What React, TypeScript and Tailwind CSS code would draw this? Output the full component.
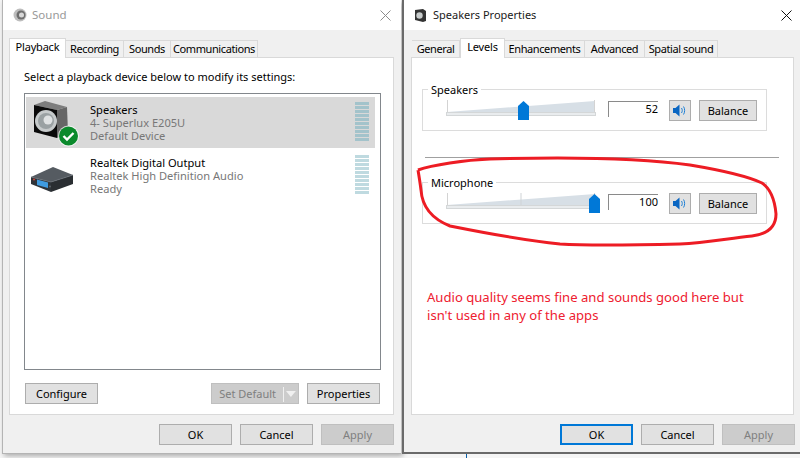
const font = { fontFamily: '"Noto Sans", "Open Sans", sans-serif' };

function Btn({ label, w, disabled, focus }: { label: string; w: string; disabled?: boolean; focus?: boolean }) {
  return (
    <div
      className={`${w} h-[21px] flex items-center justify-center pt-px text-[11px] border ${
        disabled
          ? "bg-[#cccccc] border-[#bfbfbf] text-[#7f7f7f]"
          : focus
            ? "bg-[#e1e1e1] border-2 border-[#0078d7] text-black"
            : "bg-[#e1e1e1] border-[#adadad] text-black"
      }`}
    >
      {label}
    </div>
  );
}

function Tab({ label, w, active }: { label: string; w: string; active?: boolean }) {
  return (
    <div
      className={`${w} flex items-center justify-center whitespace-nowrap text-[11px] text-black border border-[#d9d9d9] border-b-0 ${
        active ? "h-[20px] bg-white -mb-px pb-[3px] z-10 tracking-[-0.2px]" : "h-[17px] bg-[#f0f0f0] border-l-0 tracking-[-0.4px]"
      }`}
    >
      {label}
    </div>
  );
}

function Meter({ color }: { color: string }) {
  return (
    <div className="flex flex-col gap-px w-[14px]">
      {Array.from({ length: 10 }).map((_, i) => (
        <div key={i} className={`h-[3px] ${color}`} />
      ))}
    </div>
  );
}

function Close({ color }: { color: string }) {
  return (
    <svg width="11" height="11" viewBox="0 0 11 11" className="shrink-0">
      <path d="M0.5 0.5L10.5 10.5M10.5 0.5L0.5 10.5" stroke={color} strokeWidth="1" fill="none" />
    </svg>
  );
}

function SpeakerIcon() {
  return (
    <svg width="60" height="51" viewBox="0 0 60 51">
      <path d="M8 8L19 4L41 10L31 13Z" fill="#7d7d7d" />
      <path d="M31 13L41 10L42 36L31 41Z" fill="#666666" />
      <path d="M8 8L31 13L31 41L8 35Z" fill="#0a0a0a" />
      <circle cx="20" cy="24" r="11" fill="#c6cacb" />
      <circle cx="20" cy="24" r="8" fill="#9aa1a3" />
      <circle cx="22" cy="23" r="4.5" fill="#dfe2e3" />
      <circle cx="42.5" cy="39" r="10.5" fill="#ffffff" opacity="0.7" />
      <circle cx="42.5" cy="39" r="9.5" fill="#0b8a2c" />
      <path d="M37.5 39L41 42.5L47.5 36" stroke="#ffffff" strokeWidth="2.4" fill="none" />
    </svg>
  );
}

function DeviceIcon() {
  return (
    <svg width="60" height="51" viewBox="0 0 60 51">
      <path d="M5 27L27 17L47 25L25 32Z" fill="#555b61" />
      <path d="M5 27L25 32L25 42L5 34Z" fill="#2f3439" />
      <path d="M25 32L47 25L47 34L25 42Z" fill="#2a2e32" />
      <path d="M5 27L25 32L47 25" stroke="#6d747b" strokeWidth="0.7" fill="none" />
      <path d="M11 29.5L22 32.5L22 38L11 35Z" fill="#3f9be0" />
      <circle cx="8" cy="29.5" r="1" fill="#c9443c" />
      <circle cx="24" cy="36.5" r="1" fill="#5d6368" />
    </svg>
  );
}

function Mute() {
  return (
    <div className="w-[22px] h-[21px] bg-[#e1e1e1] border border-[#adadad] flex items-center justify-center">
      <svg width="16" height="15" viewBox="0 0 16 15">
        <path d="M1 5H3.5L7.5 1.5V13.5L3.5 10H1Z" fill="#0a66c2" />
        <path d="M9.5 5C10.5 6.5 10.5 8.5 9.5 10M11.5 3.5C13 5.5 13 9.5 11.5 11.5" stroke="#1c7fd6" strokeWidth="1" fill="none" />
      </svg>
    </div>
  );
}

function Slider({ thumb, ticks }: { thumb: string; ticks: boolean }) {
  return (
    <div className="relative w-[150px] h-[21px] shrink-0">
      <svg width="150" height="21" viewBox="0 0 150 21" className="block">
        <path d="M1 12L149 1V12Z" fill="#d7dfe6" />
        <rect x="0.5" y="12.5" width="149" height="3" fill="#e9ecee" stroke="#d4d7d8" />
        <path d="M1.5 0V12M148.5 0V12" stroke="#d3d3d3" />
        {ticks && <path d="M75 0V12" stroke="#cfd3d6" />}
      </svg>
      <svg width="11" height="19" viewBox="0 0 11 19" className={`absolute top-px ${thumb}`}>
        <path d="M0 5L5.5 0L11 5V19H0Z" fill="#0078d7" />
      </svg>
    </div>
  );
}

function Group({ label, value, thumb, ticks, className }: { label: string; value: string; thumb: string; ticks: boolean; className: string }) {
  return (
    <div className={`relative w-[345px] h-[42px] border border-[#dcdcdc] pl-[23px] pt-[10px] flex items-start ${className}`}>
      <div className="absolute left-[5px] -top-[8px] bg-white px-[3px] text-[11px] leading-[16px] text-black">{label}</div>
      <Slider thumb={thumb} ticks={ticks} />
      <div className="ml-[12px] w-[50px] h-[16px] mt-px border-l border-t border-[#8a8a8a] text-[11px] leading-[13px] text-right text-black">
        {value}
      </div>
      <div className="ml-[11px]"><Mute /></div>
      <div className="ml-[8px]"><Btn label="Balance" w="w-[58px]" /></div>
    </div>
  );
}

export default function App() {
  return (
    <div className="relative w-[800px] h-[458px] overflow-hidden bg-[#f5f5f5]" style={font}>
      <div className="absolute left-[466px] top-[453px] w-px h-[5px] bg-[#0a5fa8]" />

      {/* Sound window */}
      <div className="absolute left-[2px] top-0 w-[399px] h-[454px] flex flex-col border-l border-b border-[#b4b4b4] bg-[#f0f0f0] shadow-[2px_2px_5px_rgba(0,0,0,0.3)]">
        <div className="h-[30px] bg-white flex items-center pl-[10px] pr-[10px] shrink-0">
          <svg width="14" height="14" viewBox="0 0 14 14">
            <circle cx="7" cy="7" r="6.5" fill="#bdbdbd" />
            <circle cx="8" cy="7" r="4.5" fill="#6e6e6e" />
            <circle cx="8.5" cy="7" r="2.5" fill="#d8d8d8" />
          </svg>
          <span className="ml-[5px] text-[11.5px] text-[#999999] flex-1">Sound</span>
          <Close color="#8c8c8c" />
        </div>
        <div className="flex items-end h-[27px] pl-[6px] shrink-0">
          <Tab label="Playback" w="w-[57px]" active />
          <Tab label="Recording" w="w-[58px]" />
          <Tab label="Sounds" w="w-[47px]" />
          <Tab label="Communications" w="w-[87px]" />
        </div>
        <div className="ml-[6px] w-[385px] h-[358px] bg-white border border-[#d9d9d9] pl-[14px] pr-[12px] flex flex-col shrink-0">
          <div className="mt-[11px] h-[16px] text-[11px] leading-[16px] text-black">Select a playback device below to modify its settings:</div>
          <div className="mt-[8px] h-[277px] border border-[#82878c] p-px flex flex-col gap-[2px]">
            <div className="w-[349px] h-[51px] mt-[2px] bg-[#d9d9d9] flex items-start">
              <SpeakerIcon />
              <div className="ml-[4px] pt-[6px] text-[11.1px] leading-[13px] flex-1">
                <div className="text-black">Speakers</div>
                <div className="text-[#777777]">4- Superlux E205U</div>
                <div className="text-[#777777]">Default Device</div>
              </div>
              <div className="pt-[5px] mr-[6px]"><Meter color="bg-[#a3c3cb]" /></div>
            </div>
            <div className="w-[349px] h-[51px] flex items-start">
              <DeviceIcon />
              <div className="ml-[4px] pt-[6px] text-[11.1px] leading-[13px] flex-1">
                <div className="text-black">Realtek Digital Output</div>
                <div className="text-[#777777]">Realtek High Definition Audio</div>
                <div className="text-[#777777]">Ready</div>
              </div>
              <div className="pt-[5px] mr-[6px]"><Meter color="bg-[#bfdae0]" /></div>
            </div>
          </div>
          <div className="mt-[13px] flex items-center">
            <Btn label="Configure" w="w-[73px] ml-px" />
            <div className="ml-auto w-[88px] h-[21px] pt-px bg-[#cccccc] border border-[#bfbfbf] flex items-center text-[11px] text-[#7f7f7f]">
              <span className="w-[72px] text-center">Set Default</span>
              <span className="w-px h-[15px] bg-[#f0f0f0]" />
              <svg width="14" height="8" viewBox="0 0 14 8"><path d="M2 1H12L7 7Z" fill="#f0f0f0" /></svg>
            </div>
            <div className="ml-[8px] mr-px"><Btn label="Properties" w="w-[73px]" /></div>
          </div>
        </div>
        <div className="flex gap-[8px] pl-[156px] pt-[9px]">
          <Btn label="OK" w="w-[73px]" />
          <Btn label="Cancel" w="w-[73px]" />
          <Btn label="Apply" w="w-[73px]" disabled />
        </div>
      </div>

      {/* Speakers Properties window */}
      <div className="absolute left-[402px] top-0 w-[398px] h-[454px] flex flex-col border-l-2 border-b-2 border-[#6a6a6a] bg-[#f0f0f0]">
        <div className="h-[30px] bg-white flex items-center pl-[10px] pr-[8px] shrink-0">
          <svg width="12" height="13" viewBox="0 0 12 13">
            <path d="M1 1L9 0L12 2V12L9 13L1 11Z" fill="#333333" />
            <circle cx="5.5" cy="6.5" r="3.2" fill="#c8cccc" />
          </svg>
          <span className="ml-[7px] text-[11px] text-[#1a1a1a] flex-1">Speakers Properties</span>
          <Close color="#111111" />
        </div>
        <div className="flex items-end h-[27px] pl-[8px] shrink-0">
          <Tab label="General" w="w-[48px] border-l" />
          <Tab label="Levels" w="w-[45px]" active />
          <Tab label="Enhancements" w="w-[80px]" />
          <Tab label="Advanced" w="w-[60px]" />
          <Tab label="Spatial sound" w="w-[73px]" />
        </div>
        <div className="ml-[7px] w-[383px] h-[358px] bg-white border border-[#d9d9d9] pl-[10px] flex flex-col shrink-0">
          <Group label="Speakers" value="52" thumb="left-[72px]" ticks={false} className="mt-[31px]" />
          <div className="mt-[26px] ml-[3px] w-[354px] h-px bg-[#a0a0a0]" />
          <Group label="Microphone" value="100" thumb="left-[143px]" ticks className="mt-[24px]" />
          <div className="mt-[64px] ml-[5px] text-[13.1px] leading-[18px] text-[#ee2030] w-[340px]">
            Audio quality seems fine and sounds good here but isn't used in any of the apps
          </div>
        </div>
        <div className="flex gap-[8px] pl-[156px] pt-[9px]">
          <Btn label="OK" w="w-[73px]" focus />
          <Btn label="Cancel" w="w-[73px]" />
          <Btn label="Apply" w="w-[73px]" disabled />
        </div>
      </div>

      {/* Red freehand annotation */}
      <svg width="800" height="458" viewBox="0 0 800 458" className="absolute left-0 top-0 pointer-events-none">
        <path
          d="M418 170C432 165 465 160 490 159C560 157 640 158 690 165C720 170 745 175 762 183C772 190 775 202 776 214C776 226 768 234 752 236C725 239 705 243 680 244C640 245 590 246 560 244C520 240 480 232 450 226C430 218 422 205 421 190C420 182 419 176 418 170"
          stroke="#ed1c24"
          strokeWidth="3"
          fill="none"
        />
      </svg>
    </div>
  );
}
